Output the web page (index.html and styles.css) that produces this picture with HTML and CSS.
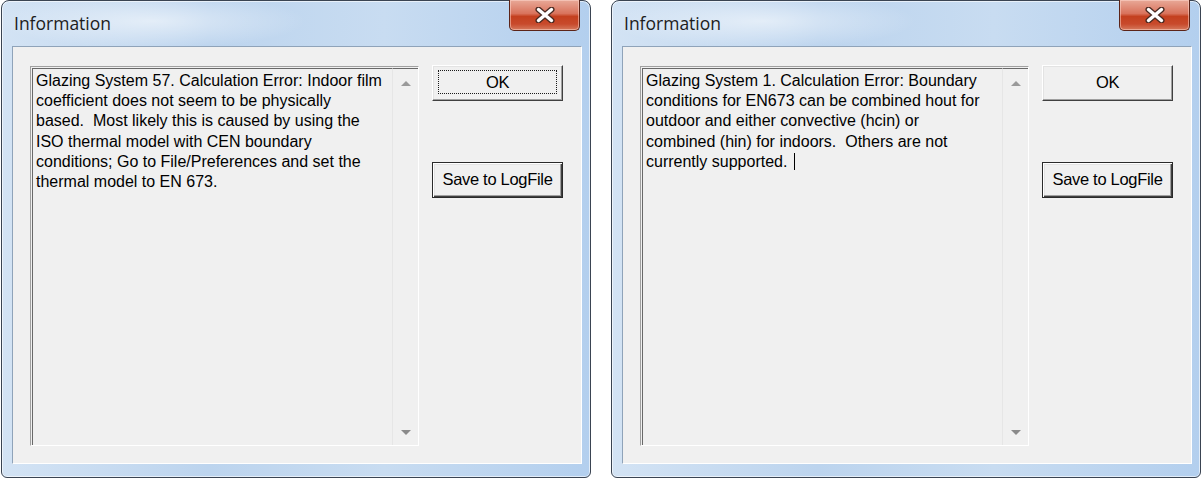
FILE: index.html
```html
<!DOCTYPE html>
<html>
<head>
<meta charset="utf-8">
<link rel="stylesheet" href="styles.css">
</head>
<body>
<div class="desk">
  <div class="window">
    <div class="titlebar">
      <span class="title">Information</span>
      <div class="close">
        <svg width="22" height="16" viewBox="0 0 22 16"><path d="M4.5 2.5 L17.5 13.5 M17.5 2.5 L4.5 13.5" stroke="#4a2a22" stroke-width="6" stroke-linecap="round"/><path d="M4.5 2.5 L17.5 13.5 M17.5 2.5 L4.5 13.5" stroke="#ffffff" stroke-width="3.4" stroke-linecap="round"/></svg>
      </div>
    </div>
    <div class="client">
      <div class="textbox">
        <div class="text">Glazing System 57. Calculation Error: Indoor film<br>coefficient does not seem to be physically<br>based.&nbsp; Most likely this is caused by using the<br>ISO thermal model with CEN boundary<br>conditions; Go to File/Preferences and set the<br>thermal model to EN 673.</div>
        <div class="scrollbar"><span class="arrow up"></span><span class="arrow down"></span></div>
      </div>
      <div class="buttons">
        <button class="btn focused"><span class="focus">OK</span></button>
        <button class="btn default">Save to LogFile</button>
      </div>
    </div>
  </div>
  <div class="window">
    <div class="titlebar">
      <span class="title">Information</span>
      <div class="close">
        <svg width="22" height="16" viewBox="0 0 22 16"><path d="M4.5 2.5 L17.5 13.5 M17.5 2.5 L4.5 13.5" stroke="#4a2a22" stroke-width="6" stroke-linecap="round"/><path d="M4.5 2.5 L17.5 13.5 M17.5 2.5 L4.5 13.5" stroke="#ffffff" stroke-width="3.4" stroke-linecap="round"/></svg>
      </div>
    </div>
    <div class="client">
      <div class="textbox">
        <div class="text">Glazing System 1. Calculation Error: Boundary<br>conditions for EN673 can be combined hout for<br>outdoor and either convective (hcin) or<br>combined (hin) for indoors.&nbsp; Others are not<br>currently supported. <span class="caret"></span></div>
        <div class="scrollbar"><span class="arrow up"></span><span class="arrow down"></span></div>
      </div>
      <div class="buttons">
        <button class="btn"><span class="nofocus">OK</span></button>
        <button class="btn default">Save to LogFile</button>
      </div>
    </div>
  </div>
</div>
</body>
</html>
```

FILE: styles.css
```css
html, body {
  margin: 0;
  padding: 0;
  background: #ffffff;
}

.desk {
  display: flex;
  gap: 20px;
  padding-left: 1px;
  width: 1202px;
  height: 479px;
  box-sizing: border-box;
}

.window {
  width: 590px;
  height: 478px;
  box-sizing: border-box;
  border: 1px solid #3a4452;
  border-radius: 8px 8px 6px 6px;
  padding: 0 8px 13px 10px;
  display: flex;
  flex-direction: column;
  background:
    radial-gradient(ellipse 220px 40px at 150px 20px, rgba(255,255,255,0.55), rgba(255,255,255,0) 70%),
    linear-gradient(to right, #d3e3f4 0%, #bcd4ee 35%, #c8dcf1 65%, #b3cfee 100%);
  box-shadow: inset 0 0 0 1px rgba(255,255,255,0.6);
}

.titlebar {
  height: 45px;
  display: flex;
  justify-content: space-between;
  align-items: flex-start;
}

.title {
  font-family: "Open Sans", "Noto Sans", sans-serif;
  font-size: 17.5px;
  color: #1c1c1c;
  margin: 10px 0 0 2px;
}

.close {
  width: 71px;
  height: 31px;
  margin-top: -1px;
  margin-right: 2px;
  box-sizing: border-box;
  border: 1px solid #5c2418;
  border-top: none;
  border-radius: 0 0 5px 5px;
  background: linear-gradient(to bottom, #e8a998 0%, #d9735c 45%, #c4401f 55%, #c84a2c 80%, #d67a5e 100%);
  box-shadow: inset 0 0 0 1px rgba(255,220,210,0.5);
  display: flex;
  align-items: center;
  justify-content: center;
}

.close svg {
  display: block;
}

.client {
  flex: 1;
  background: #f0f0f0;
  border: 1px solid #8fa3b9;
  border-bottom-color: #ffffff;
  border-right-color: #ffffff;
  padding: 19px 18px 0 17px;
  display: flex;
  gap: 13px;
  align-items: flex-start;
}

.textbox {
  width: 389px;
  height: 380px;
  box-sizing: border-box;
  border-style: solid;
  border-width: 1px;
  border-color: #a0a0a0 #ffffff #ffffff #a0a0a0;
  padding: 1px 0 0 1px;
  display: flex;
  background: #f0f0f0;
}

.text {
  flex: 1;
  border-top: 1px solid #696969;
  border-left: 1px solid #696969;
  padding: 2px 2px 0 3px;
  font-family: "Liberation Sans", Arial, sans-serif;
  font-size: 16px;
  line-height: 20.2px;
  color: #000000;
  letter-spacing: 0px;
  white-space: nowrap;
  overflow: hidden;
}

.caret {
  display: inline-block;
  width: 1px;
  height: 17px;
  background: #000;
  vertical-align: -3px;
  margin-left: 2px;
}

.scrollbar {
  width: 26px;
  flex: none;
  border-top: 1px solid #696969;
  border-left: 1px solid #e6e6e6;
  background: #f0f0f0;
  display: flex;
  flex-direction: column;
  justify-content: space-between;
  align-items: center;
  padding: 12px 0 10px 0;
  box-sizing: border-box;
}

.arrow {
  width: 0;
  height: 0;
  border-left: 5px solid transparent;
  border-right: 5px solid transparent;
}

.arrow.up {
  border-bottom: 5px solid #9a9a9a;
}

.arrow.down {
  border-top: 5px solid #8a8a8a;
}

.buttons {
  display: flex;
  flex-direction: column;
  gap: 61px;
  margin-top: -1px;
}

.btn {
  width: 131px;
  height: 36px;
  box-sizing: border-box;
  background: #f0f0f0;
  font-family: "Liberation Sans", Arial, sans-serif;
  font-size: 16.5px;
  color: #000;
  padding: 0 0 2px 0;
  border-style: solid;
  border-width: 1px;
  border-color: #ffffff #404040 #404040 #ffffff;
  box-shadow: inset -1px -1px 0 #a0a0a0, inset 1px 1px 0 #e3e3e3;
  display: flex;
  align-items: center;
  justify-content: center;
  letter-spacing: -0.3px;
}

.btn.default {
  border-color: #2a2a2a;
  box-shadow: inset 1px 1px 0 #ffffff, inset -1px -1px 0 #404040, inset -2px -2px 0 #a0a0a0, inset 2px 2px 0 #e3e3e3;
}

.focus {
  width: 119px;
  height: 24px;
  box-sizing: border-box;
  border: 1px dotted #1a1a1a;
  display: flex;
  align-items: center;
  justify-content: center;
}

.nofocus {
  display: flex;
  align-items: center;
  justify-content: center;
}
```
